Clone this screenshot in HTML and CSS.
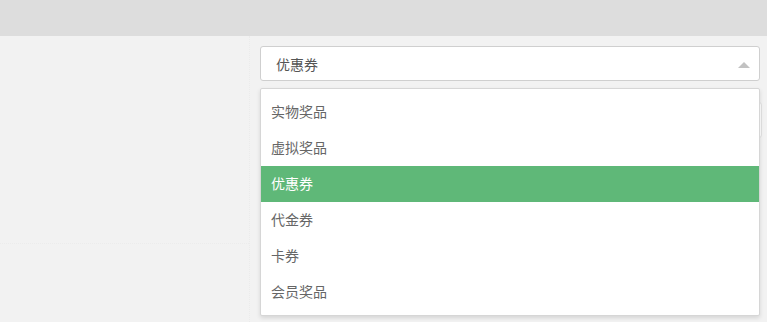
FILE: index.html
```html
<!DOCTYPE html>
<html lang="zh-CN">
<head>
<meta charset="utf-8">
<link rel="stylesheet" href="styles.css">
</head>
<body>
<div class="header"></div>
<div class="main">
  <div class="side">
    <div class="side-rule"></div>
  </div>
  <div class="content">
    <div class="select">
      <div class="select-title">
        <span class="select-value">优惠券</span>
        <i class="caret"></i>
      </div>
      <dl class="options">
        <dd class="option">实物奖品</dd>
        <dd class="option">虚拟奖品</dd>
        <dd class="option selected">优惠券</dd>
        <dd class="option">代金券</dd>
        <dd class="option">卡券</dd>
        <dd class="option">会员奖品</dd>
      </dl>
    </div>
    <div class="field-behind"></div>
  </div>
</div>
</body>
</html>
```
FILE: styles.css
```css
* { box-sizing: border-box; }
html, body {
  margin: 0;
  padding: 0;
  height: 100%;
  background: #f2f2f2;
  font-family: "Noto Sans CJK SC", "Liberation Sans", sans-serif;
  font-size: 14px;
  color: #666;
  overflow: hidden;
}
.header {
  height: 36px;
  background: #dddddd;
}
.main {
  display: flex;
  height: 286px;
}
.side {
  width: 250px;
  border-right: 1px dotted #ebebeb;
  padding-top: 207px;
}
.side-rule {
  border-top: 1px dotted #ececec;
}
.content {
  padding: 10px 0 0 10px;
  display: flex;
  flex-direction: column;
}
.select {
  position: relative;
  width: 500px;
}
.select-title {
  height: 35px;
  background: #fff;
  border: 1px solid #cfcfcf;
  border-radius: 3px;
  display: flex;
  align-items: center;
  padding-left: 15px;
  position: relative;
}
.select-value {
  color: #555;
  line-height: 1;
}
.caret {
  position: absolute;
  right: 9px;
  top: 50%;
  margin-top: -8px;
  width: 0;
  height: 0;
  border-style: solid;
  border-width: 6px;
  border-color: transparent transparent #c2c2c2 transparent;
}
.options {
  position: absolute;
  left: 0;
  top: 42px;
  width: 500px;
  margin: 0;
  padding: 5px 0;
  background: #fff;
  border: 1px solid #d6d6d6;
  border-radius: 2px;
  box-shadow: 0 2px 4px rgba(0,0,0,0.12);
  z-index: 10;
}
.option {
  margin: 0;
  padding: 0 10px 1px;
  height: 36px;
  line-height: 34px;
  color: #666;
}
.option.selected {
  background: #5fb878;
  color: #fff;
}
.field-behind {
  margin-top: 21px;
  width: 502px;
  height: 36px;
  background: #fff;
  border: 1px solid #e2e2e2;
  border-radius: 3px;
}
```
